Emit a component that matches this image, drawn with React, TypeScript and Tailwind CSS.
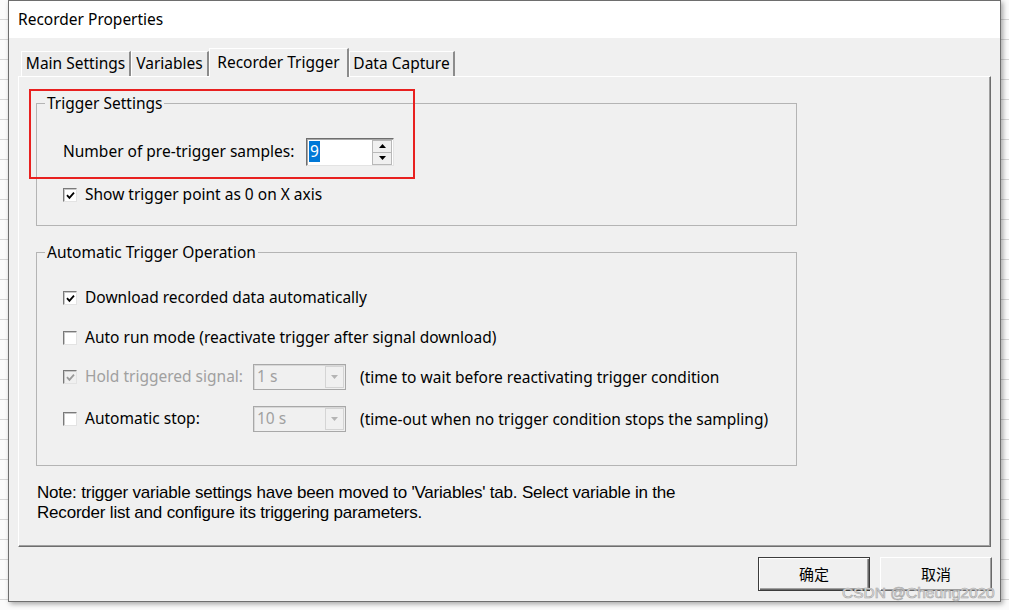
import React from "react";

const ui = "font-['Noto_Sans','Noto_Sans_CJK_SC',sans-serif]";

const Check = ({ disabled }: { disabled?: boolean }) => (
  <svg width="9" height="9" viewBox="0 0 9 9">
    <path
      d="M1 4.2 L3.4 6.8 L8 1.6"
      fill="none"
      stroke={disabled ? "#9a9a9a" : "#000"}
      strokeWidth="1.8"
    />
  </svg>
);

const CheckBox = ({ checked, disabled }: { checked?: boolean; disabled?: boolean }) => (
  <span
    className={`flex h-[14px] w-[14px] shrink-0 items-center justify-center border border-t-[#7a7a7a] border-l-[#7a7a7a] border-r-[#e3e3e3] border-b-[#e3e3e3] ${
      disabled ? "bg-[#f0f0f0]" : "bg-white"
    } shadow-[inset_1px_1px_0_#c8c8c8]`}
  >
    {checked && <Check disabled={disabled} />}
  </span>
);

const Tri = ({ dir, color }: { dir: "up" | "down"; color: string }) => (
  <svg width="7" height="4" viewBox="0 0 7 4">
    <path d={dir === "up" ? "M0 4 L3.5 0 L7 4 Z" : "M0 0 L7 0 L3.5 4 Z"} fill={color} />
  </svg>
);

const Combo = ({ value }: { value: string }) => (
  <div className="flex h-[26px] w-[93px] items-center border border-[#a8a8a8] bg-[#f0f0f0] shadow-[inset_1px_1px_0_#d8d8d8]">
    <span className="flex-1 pl-[3px] text-[15.5px] leading-none text-[#a0a0a0]">{value}</span>
    <span className="mr-[1px] flex h-[22px] w-[19px] items-center justify-center border border-[#d4d4d4] bg-[#f0f0f0]">
      <Tri dir="down" color="#b4b4b4" />
    </span>
  </div>
);

const tabs = [
  { label: "Main Settings", w: "w-[110px]" },
  { label: "Variables", w: "w-[78px]" },
  { label: "Recorder Trigger", w: "w-[140px]", active: true },
  { label: "Data Capture", w: "w-[106px]" },
];

export default function App() {
  return (
    <div
      className={`relative h-[610px] w-[1009px] overflow-hidden bg-[#fbfbfb] bg-[repeating-linear-gradient(to_bottom,transparent_0,transparent_19px,#d6d6d6_19px,#d6d6d6_20px)] ${ui}`}
    >
      <div className="ml-[8px] flex h-[602px] w-[993px] flex-col border border-[#6e6e6e] bg-[#f0f0f0] shadow-[2px_2px_5px_rgba(0,0,0,0.35)]">
        {/* title */}
        <div className="flex h-[37px] shrink-0 items-center bg-white pl-[9px] text-[15.5px] text-black">
          Recorder Properties
        </div>

        <div className="flex flex-1 flex-col px-[9px] pt-[10px]">
          {/* tabs */}
          <div className="flex h-[28px] items-end pl-[3px] text-[15.5px] text-black">
            {tabs.map(t =>
              t.active ? (
                <div
                  key={t.label}
                  className={`relative z-10 -mb-px flex h-[29px] ${t.w} items-start justify-center border-l border-t border-white border-r-2 border-r-[#8c8c8c] bg-[#f0f0f0] pt-[2px]`}
                >
                  {t.label}
                </div>
              ) : (
                <div
                  key={t.label}
                  className={`flex h-[25px] ${t.w} items-center justify-center border-l border-t border-white border-r-2 border-r-[#8c8c8c] bg-[#ececec]`}
                >
                  {t.label}
                </div>
              ),
            )}
          </div>

          {/* tab panel */}
          <div className="relative flex h-[471px] w-[973px] flex-col border-l border-t border-white border-r border-b border-r-[#6e6e6e] border-b-[#6e6e6e] px-[17px] pt-[16px] shadow-[inset_-1px_-1px_0_#a0a0a0] text-[15.5px] text-black">
            <fieldset className="w-[761px] border border-[#b4b4b4]">
              <legend className="ml-[8px] px-[2px] leading-[20px]">Trigger Settings</legend>
              <div className="pb-[20px] pl-[26px]">
                <div className="mt-[25px] flex items-center">
                  <span className="w-[243px]">Number of pre-trigger samples:</span>
                  <div className="flex h-[28px] w-[88px] items-center border border-t-[#6e6e6e] border-l-[#6e6e6e] border-r-[#e3e3e3] border-b-[#e3e3e3] bg-white shadow-[inset_1px_1px_0_#a8a8a8]">
                    <div className="flex-1 pl-[2px]">
                      <span className="inline-block h-[21px] bg-[#0078d7] px-[1px] leading-[21px] text-white">9</span>
                    </div>
                    <div className="mr-[1px] flex h-[25px] w-[20px] flex-col">
                      <span className="flex flex-1 items-center justify-center border border-[#b8b8b8] bg-[#f0f0f0]">
                        <Tri dir="up" color="#000" />
                      </span>
                      <span className="flex flex-1 items-center justify-center border border-t-0 border-[#b8b8b8] bg-[#f0f0f0]">
                        <Tri dir="down" color="#000" />
                      </span>
                    </div>
                  </div>
                </div>
                <div className="mt-[19px] flex h-[20px] items-center gap-[8px]">
                  <CheckBox checked />
                  <span>Show trigger point as 0 on X axis</span>
                </div>
              </div>
            </fieldset>

            <fieldset className="mt-[16px] w-[761px] border border-[#b4b4b4]">
              <legend className="ml-[8px] px-[2px] leading-[20px]">Automatic Trigger Operation</legend>
              <div className="pb-[33px] pl-[26px]">
                <div className="mt-[26px] flex h-[20px] items-center gap-[8px]">
                  <CheckBox checked />
                  <span>Download recorded data automatically</span>
                </div>
                <div className="mt-[20px] flex h-[20px] items-center gap-[8px]">
                  <CheckBox />
                  <span>Auto run mode (reactivate trigger after signal download)</span>
                </div>
                <div className="mt-[16px] flex h-[26px] items-center">
                  <div className="flex w-[190px] items-center gap-[8px] text-[#a0a0a0]">
                    <CheckBox checked disabled />
                    <span>Hold triggered signal:</span>
                  </div>
                  <Combo value="1 s" />
                  <span className="ml-[14px] w-[359px] overflow-hidden whitespace-nowrap pt-[2px]">
                    (time to wait before reactivating trigger condition)
                  </span>
                </div>
                <div className="mt-[16px] flex h-[26px] items-center">
                  <div className="flex w-[190px] items-center gap-[8px]">
                    <CheckBox />
                    <span>Automatic stop:</span>
                  </div>
                  <Combo value="10 s" />
                  <span className="ml-[14px] whitespace-nowrap pt-[2px]">
                    (time-out when no trigger condition stops the sampling)
                  </span>
                </div>
              </div>
            </fieldset>

            <p className="mt-[17px] w-[700px] pl-[1px] font-['Liberation_Sans_Narrow','Liberation_Sans',sans-serif] text-[17px] leading-[20px] tracking-[-0.2px]">
              Note: trigger variable settings have been moved to 'Variables' tab. Select variable in the
              <br />
              Recorder list and configure its triggering parameters.
            </p>

            {/* red annotation */}
            <div className="pointer-events-none absolute left-[10px] top-[12px] h-[90px] w-[386px] border-2 border-[#e8201f]" />
          </div>

          {/* buttons */}
          <div className="-mr-[1px] mt-[10px] flex justify-end gap-[10px] font-['Noto_Sans_CJK_SC',sans-serif] text-[15px] text-black">
            <button className="h-[34px] w-[112px] border border-[#3c3c3c] bg-[#f0f0f0] shadow-[inset_1px_1px_0_#fff,inset_-1px_-1px_0_#696969,inset_-2px_-2px_0_#a0a0a0]">
              确定
            </button>
            <button className="h-[34px] w-[112px] border border-t-white border-l-white border-r-[#696969] border-b-[#696969] bg-[#f0f0f0] shadow-[inset_-1px_-1px_0_#a0a0a0]">
              取消
            </button>
          </div>
        </div>
      </div>

      {/* watermark */}
      <div className="pointer-events-none absolute left-[842px] top-[583px] whitespace-nowrap font-['Liberation_Sans',sans-serif] text-[15.5px] leading-[20px] text-[#eeeeee] [-webkit-text-stroke:0.7px_#a8a8a8]">
        CSDN @Cheung2020
      </div>
    </div>
  );
}
